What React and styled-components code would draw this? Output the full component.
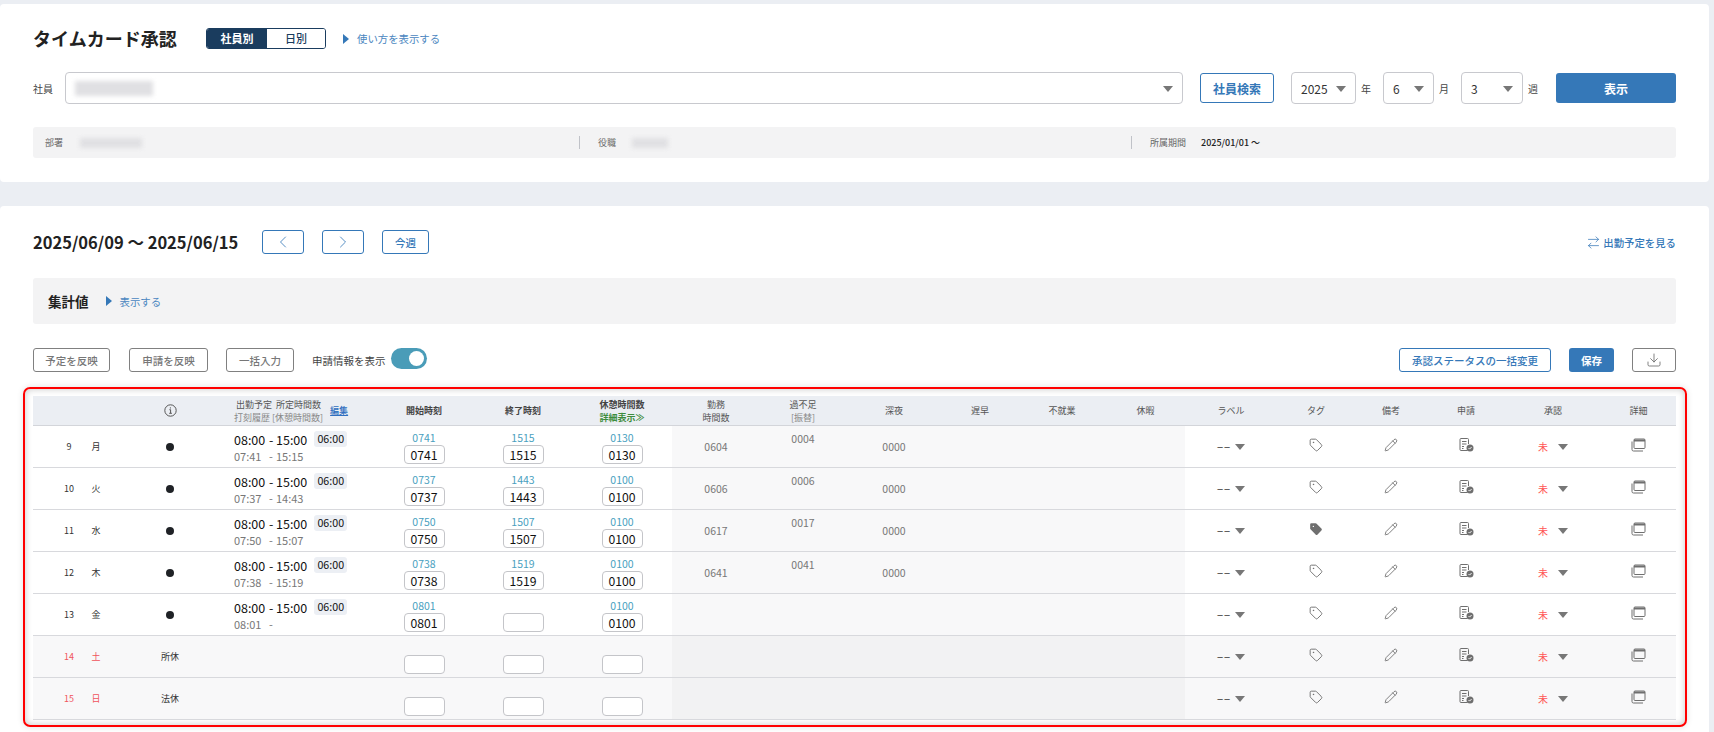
import React from 'react';
import styled, {createGlobalStyle} from 'styled-components';
import {ArrowRightLeft, ChevronLeft, ChevronRight, Download, Pencil, Tag} from 'lucide-react';

const blue = '#3578b8';
const linkBlue = '#4a86c0';
const gridColumns = '97px 80px 164px 100px 98px 100px 88px 86px 96px 76px 88px 79px 92px 78px 72px 78px 96px 75px';

const days = [
  {num: 9, week: '月', start: '0741', end: '1515', rest: '0130', in: '07:41', out: '15:15', work: '0604', over: '0004', deep: '0000'},
  {num: 10, week: '火', start: '0737', end: '1443', rest: '0100', in: '07:37', out: '14:43', work: '0606', over: '0006', deep: '0000'},
  {num: 11, week: '水', start: '0750', end: '1507', rest: '0100', in: '07:50', out: '15:07', work: '0617', over: '0017', deep: '0000', tagged: true},
  {num: 12, week: '木', start: '0738', end: '1519', rest: '0100', in: '07:38', out: '15:19', work: '0641', over: '0041', deep: '0000'},
  {num: 13, week: '金', start: '0801', end: '', rest: '0100', in: '08:01', out: ''},
  {num: 14, week: '土', off: '所休', start: '', end: '', rest: ''},
  {num: 15, week: '日', off: '法休', start: '', end: '', rest: ''},
];

const InfoIcon = () => (
  <svg width="13" height="13" viewBox="0 0 13 13" fill="none" stroke="#555" strokeWidth="1">
    <circle cx="6.5" cy="6.5" r="5.7" />
    <path d="M5.4 5.7h1.2v3.4M5.2 9.3h2.7" />
    <circle cx="6.4" cy="3.9" r=".6" fill="#555" stroke="none" />
  </svg>
);

const FilledTag = () => (
  <svg width="14" height="14" viewBox="0 0 24 24" fill="#6f6f6f">
    <path fillRule="evenodd" d="M12.6 2.6A2 2 0 0 0 11.2 2H4a2 2 0 0 0-2 2v7.2a2 2 0 0 0 .6 1.4l8.7 8.7a2.4 2.4 0 0 0 3.4 0l6.6-6.6a2.4 2.4 0 0 0 0-3.4zM7.5 6.3a1.2 1.2 0 1 1 0 2.4 1.2 1.2 0 0 1 0-2.4z" />
  </svg>
);

const ApplyIcon = () => (
  <svg width="15" height="14" viewBox="0 0 15 14" fill="none" stroke="#6f6f6f" strokeWidth="1">
    <path d="M8.5 12.5H2a1 1 0 0 1-1-1v-10a1 1 0 0 1 1-1h6.5a1 1 0 0 1 1 1V6" />
    <path d="M3 3.5h4.5M3 6h4.5M3 8.5h2M3 10.500h1.500" />
    <circle cx="11" cy="10" r="3.500" fill="#6f6f6f" stroke="none" />
    <path d="M9.500 10l1.100 1.100L12.600 9" stroke="#fff" strokeWidth=".9" />
  </svg>
);

const DetailIcon = () => (
  <svg width="15" height="14" viewBox="0 0 15 14" fill="none" stroke="#6f6f6f" strokeWidth="1">
    <rect x="3" y="1" width="11" height="9.500" rx="1" />
    <path d="M3 2.500h11" strokeWidth="2" />
    <path d="M1 3.500v8a1.500 1.500 0 0 0 1.500 1.500H12" />
  </svg>
);

const TimeInput = ({value}) => <CellInput value={value} readOnly />;

const App = () => (
  <Page>
    <GlobalStyle />
    <Card>
      <TitleRow>
        <Title>タイムカード承認</Title>
        <Segment>
          <SegmentItem $active>社員別</SegmentItem>
          <SegmentItem>日別</SegmentItem>
        </Segment>
        <Disclosure><Triangle />使い方を表示する</Disclosure>
      </TitleRow>
      <SearchRow>
        <FieldLabel>社員</FieldLabel>
        <SelectBox $grow>
          <BlurBlock $w={78} $h={15} />
          <Caret />
        </SelectBox>
        <SearchButton>社員検索</SearchButton>
        <SelectBox $w={65} $ml={17}>2025<Caret /></SelectBox>
        <UnitLabel>年</UnitLabel>
        <SelectBox $w={51} $ml={12}>6<Caret /></SelectBox>
        <UnitLabel>月</UnitLabel>
        <SelectBox $w={62} $ml={12}>3<Caret /></SelectBox>
        <UnitLabel>週</UnitLabel>
        <PrimaryButton>表示</PrimaryButton>
      </SearchRow>
      <InfoBar>
        <InfoItem $w={534}>
          <InfoLabel>部署</InfoLabel>
          <BlurBlock $w={62} $h={10} $ml={17} />
        </InfoItem>
        <InfoItem $w={552}>
          <InfoLabel>役職</InfoLabel>
          <BlurBlock $w={36} $h={10} $ml={16} />
        </InfoItem>
        <InfoItem>
          <InfoLabel>所属期間</InfoLabel>
          <InfoValue>2025/01/01 〜</InfoValue>
        </InfoItem>
      </InfoBar>
    </Card>

    <Card $fill>
      <PeriodRow>
        <PeriodTitle>2025/06/09 〜 2025/06/15</PeriodTitle>
        <NavButton $ml={23}><ChevronLeft size={20} strokeWidth={1} /></NavButton>
        <NavButton $ml={18}><ChevronRight size={20} strokeWidth={1} /></NavButton>
        <NavButton $ml={18} $w={47}>今週</NavButton>
        <SwitchLink><ArrowRightLeft size={15} strokeWidth={1.200} />出勤予定を見る</SwitchLink>
      </PeriodRow>
      <SummaryBar>
        <SummaryTitle>集計値</SummaryTitle>
        <Disclosure><Triangle />表示する</Disclosure>
      </SummaryBar>
      <ActionRow>
        <GhostButton $w={77}>予定を反映</GhostButton>
        <GhostButton $w={79} $ml={19}>申請を反映</GhostButton>
        <GhostButton $w={68} $ml={18}>一括入力</GhostButton>
        <ToggleLabel>申請情報を表示</ToggleLabel>
        <ToggleTrack><ToggleKnob /></ToggleTrack>
        <Spacer />
        <OutlineButton>承認ステータスの一括変更</OutlineButton>
        <SaveButton>保存</SaveButton>
        <GhostButton $w={44} $ml={18}><Download size={16} strokeWidth={1.300} color="#6f6f6f" /></GhostButton>
      </ActionRow>
      <Highlight>
        <HeaderRow>
          <HeadCell />
          <HeadCell><InfoIcon /></HeadCell>
          <HeadSchedule>
            <HeadLines $center>
              <span>出勤予定&nbsp;&nbsp;所定時間数</span>
              <HeadSub>打刻履歴 [休憩時間数]</HeadSub>
            </HeadLines>
            <EditLink>編集</EditLink>
          </HeadSchedule>
          <HeadCell $bold>開始時刻</HeadCell>
          <HeadCell $bold>終了時刻</HeadCell>
          <HeadCell $bold>
            <HeadLines $center>
              <span>休憩時間数</span>
              <DetailLink>詳細表示≫</DetailLink>
            </HeadLines>
          </HeadCell>
          <HeadCell><HeadLines $center><span>勤務</span><span>時間数</span></HeadLines></HeadCell>
          <HeadCell><HeadLines $center><span>過不足</span><HeadSub>[振替]</HeadSub></HeadLines></HeadCell>
          <HeadCell>深夜</HeadCell>
          <HeadCell>遅早</HeadCell>
          <HeadCell>不就業</HeadCell>
          <HeadCell>休暇</HeadCell>
          <HeadCell>ラベル</HeadCell>
          <HeadCell>タグ</HeadCell>
          <HeadCell>備考</HeadCell>
          <HeadCell>申請</HeadCell>
          <HeadCell>承認</HeadCell>
          <HeadCell>詳細</HeadCell>
        </HeaderRow>
        {days.map(day => (
          <Row key={day.num} $off={!!day.off}>
            <DayCell $off={!!day.off}>
              <DayNum>{day.num}</DayNum>
              <DayWeek>{day.week}</DayWeek>
            </DayCell>
            <Cell>{day.off ? <OffText>{day.off}</OffText> : <Dot />}</Cell>
            <ScheduleCell>
              {!day.off && (
                <>
                  <PlanLine>
                    <TimeText>08:00</TimeText><Dash>-</Dash><span>15:00</span>
                    <HoursBadge>06:00</HoursBadge>
                  </PlanLine>
                  <ActualLine>
                    <TimeText>{day.in}</TimeText><Dash>-</Dash><span>{day.out}</span>
                  </ActualLine>
                </>
              )}
            </ScheduleCell>
            {[day.start, day.end, day.rest].map((time, i) => (
              <TimeCell key={i}>
                <Planned>{time}</Planned>
                <TimeInput value={time} />
              </TimeCell>
            ))}
            <SumCell $off={!!day.off}>{day.work}</SumCell>
            <SumCell $off={!!day.off} $top>{day.over}</SumCell>
            <SumCell $off={!!day.off}>{day.deep}</SumCell>
            <SumCell $off={!!day.off} />
            <SumCell $off={!!day.off} />
            <SumCell $off={!!day.off} />
            <Cell>
              <LabelDash>−−</LabelDash><RowCaret />
            </Cell>
            <IconCell>
              {day.tagged ? <FilledTag /> : <Tag size={14} strokeWidth={1.600} color="#6f6f6f" />}
            </IconCell>
            <IconCell><Pencil size={14} strokeWidth={1.500} color="#6f6f6f" /></IconCell>
            <IconCell><ApplyIcon /></IconCell>
            <Cell>
              <NotYet>未</NotYet><RowCaret />
            </Cell>
            <IconCell><DetailIcon /></IconCell>
          </Row>
        ))}
      </Highlight>
    </Card>
  </Page>
);

export default App;

const GlobalStyle = createGlobalStyle`
  html, body {
    margin: 0;
    height: 100%;
    overflow: hidden;
    background: #ebeef3;
    font-family: "Noto Sans CJK JP", "Noto Sans", sans-serif;
    color: #222;
  }
  * { box-sizing: border-box; }
`;

const Page = styled.div`
  display: flex;
  flex-direction: column;
  gap: 24px;
  height: 732px;
  padding: 4px 5px 0 0;
`;

const Card = styled.section`
  flex: ${props => props.$fill ? '1' : 'none'};
  padding: 24px 33px;
  background: #fff;
  border-radius: 4px;
`;

const TitleRow = styled.div`
  display: flex;
  align-items: center;
  height: 21px;
`;

const Title = styled.h1`
  margin: 0;
  width: 173px;
  font-size: 18px;
  font-weight: 700;
  line-height: 21px;
`;

const Segment = styled.div`
  display: flex;
  width: 120px;
  height: 21px;
  border: 1px solid #1a3c5e;
  border-radius: 3px;
  overflow: hidden;
`;

const SegmentItem = styled.div`
  flex: ${props => props.$active ? '0 0 60px' : '1'};
  font-size: 11px;
  font-weight: ${props => props.$active ? 700 : 500};
  line-height: 19px;
  text-align: center;
  color: ${props => props.$active ? '#fff' : '#1a3c5e'};
  background: ${props => props.$active ? '#1a3c5e' : '#fff'};
`;

const Triangle = styled.i`
  width: 0;
  height: 0;
  margin-right: 8px;
  border-style: solid;
  border-width: 5px 0 5px 6px;
  border-color: transparent transparent transparent ${blue};
`;

const Disclosure = styled.div`
  display: flex;
  align-items: center;
  margin-left: 17px;
  font-size: 10.400px;
  color: ${linkBlue};
`;

const SearchRow = styled.div`
  display: flex;
  align-items: center;
  height: 32px;
  margin-top: 23px;
`;

const FieldLabel = styled.span`
  width: 32px;
  font-size: 10px;
  color: #444;
`;

const SelectBox = styled.div`
  display: flex;
  align-items: center;
  justify-content: space-between;
  flex: ${props => props.$grow ? '1' : 'none'};
  width: ${props => props.$w ? props.$w + 'px' : 'auto'};
  height: 32px;
  margin-left: ${props => props.$ml || 0}px;
  padding: 0 9px;
  border: 1px solid #c8c9ce;
  border-radius: 4px;
  font-size: 12px;
  color: #333;
`;

const Caret = styled.i`
  width: 0;
  height: 0;
  margin-top: 2px;
  border-style: solid;
  border-width: 6px 5px 0 5px;
  border-color: #777 transparent transparent transparent;
`;

const RowCaret = styled(Caret)`
  margin-left: 4px;
  margin-top: 1px;
`;

const BlurBlock = styled.div`
  width: ${props => props.$w}px;
  height: ${props => props.$h}px;
  margin-left: ${props => props.$ml || 0}px;
  background: #e0e0e3;
  filter: blur(2px);
`;

const SearchButton = styled.button`
  width: 74px;
  height: 30px;
  margin-left: 17px;
  padding: 0;
  background: #fff;
  border: 1px solid ${blue};
  border-radius: 3px;
  font: 700 12px "Noto Sans CJK JP", sans-serif;
  color: ${blue};
`;

const UnitLabel = styled.span`
  width: 10px;
  margin-left: 5px;
  font-size: 10px;
  color: #444;
`;

const PrimaryButton = styled.button`
  width: 120px;
  height: 30px;
  margin-left: 18px;
  background: ${blue};
  border: 0;
  border-radius: 3px;
  font: 700 12px "Noto Sans CJK JP", sans-serif;
  color: #fff;
`;

const InfoBar = styled.div`
  display: flex;
  align-items: center;
  height: 31px;
  margin-top: 23px;
  padding-left: 12px;
  background: #f3f3f4;
  border-radius: 3px;
`;

const InfoItem = styled.div`
  display: flex;
  align-items: center;
  width: ${props => props.$w ? props.$w + 'px' : 'auto'};
  &:not(:first-child) {
    height: 13px;
    padding-left: 18px;
    border-left: 1px solid #c0c2c8;
  }
`;

const InfoLabel = styled.span`
  font-size: 9px;
  color: #666;
`;

const InfoValue = styled.span`
  margin-left: 15px;
  font-size: 9px;
  font-weight: 500;
  color: #222;
`;

const PeriodRow = styled.div`
  display: flex;
  align-items: center;
  height: 24px;
`;

const PeriodTitle = styled.h2`
  margin: 0;
  width: 206px;
  font-size: 16.500px;
  font-weight: 700;
  white-space: nowrap;
`;

const NavButton = styled.button`
  display: flex;
  align-items: center;
  justify-content: center;
  width: ${props => props.$w || 42}px;
  height: 24px;
  margin-left: ${props => props.$ml || 0}px;
  padding: 0;
  background: #fff;
  border: 1px solid ${blue};
  border-radius: 3px;
  font: 500 10.500px "Noto Sans CJK JP", sans-serif;
  color: ${blue};
`;

const SwitchLink = styled.div`
  display: flex;
  align-items: center;
  gap: 2px;
  margin-left: auto;
  font-size: 10.400px;
  font-weight: 500;
  color: ${blue};
`;

const SummaryBar = styled.div`
  display: flex;
  align-items: center;
  height: 46px;
  margin-top: 24px;
  padding-left: 15px;
  background: #f3f3f4;
  border-radius: 3px;
`;

const SummaryTitle = styled.span`
  font-size: 13.500px;
  font-weight: 700;
`;

const ActionRow = styled.div`
  display: flex;
  align-items: center;
  height: 24px;
  margin-top: 24px;
`;

const GhostButton = styled.button`
  display: flex;
  align-items: center;
  justify-content: center;
  width: ${props => props.$w}px;
  height: 24px;
  margin-left: ${props => props.$ml || 0}px;
  padding: 0;
  background: #fff;
  border: 1px solid #808080;
  border-radius: 3px;
  font: 500 10.500px "Noto Sans CJK JP", sans-serif;
  color: #777;
`;

const ToggleLabel = styled.span`
  margin-left: 18px;
  font-size: 10.500px;
  color: #444;
`;

const ToggleTrack = styled.div`
  display: flex;
  justify-content: flex-end;
  align-items: center;
  width: 36px;
  height: 21px;
  margin-left: 5px;
  margin-bottom: 3px;
  padding-right: 3px;
  background: #4a9cb8;
  border-radius: 11px;
`;

const ToggleKnob = styled.div`
  width: 15px;
  height: 15px;
  background: #fff;
  border-radius: 50%;
`;

const Spacer = styled.div`
  flex: 1;
`;

const OutlineButton = styled.button`
  width: 152px;
  height: 24px;
  padding: 0;
  background: #fff;
  border: 1px solid ${blue};
  border-radius: 3px;
  font: 500 10.500px "Noto Sans CJK JP", sans-serif;
  color: ${blue};
`;

const SaveButton = styled.button`
  width: 45px;
  height: 24px;
  margin-left: 18px;
  padding: 0;
  background: ${blue};
  border: 0;
  border-radius: 3px;
  font: 700 10.500px "Noto Sans CJK JP", sans-serif;
  color: #fff;
`;

const Highlight = styled.div`
  margin: 15px -11px 0 -10px;
  padding: 7px 9px 0 8px;
  height: 340px;
  border: 2px solid #f00;
  border-radius: 7px;
  box-shadow: inset 0 0 7px rgba(0, 0, 0, .22), 0 0 6px rgba(0, 0, 0, .12);
`;

const HeaderRow = styled.div`
  display: grid;
  grid-template-columns: ${gridColumns};
  height: 30px;
  background: #ebeef3;
  border-bottom: 1px solid #d3d5da;
`;

const HeadCell = styled.div`
  display: flex;
  align-items: center;
  justify-content: center;
  font-size: 9px;
  font-weight: ${props => props.$bold ? 700 : 400};
  color: ${props => props.$bold ? '#444' : '#555'};
`;

const HeadSchedule = styled.div`
  display: flex;
  align-items: center;
  padding-left: 24px;
  color: #555;
`;

const HeadLines = styled.div`
  display: flex;
  flex-direction: column;
  align-items: ${props => props.$center ? 'center' : 'flex-start'};
  font-size: 9px;
  line-height: 13px;
  color: inherit;
  white-space: nowrap;
`;

const HeadSub = styled.span`
  color: #888;
`;

const EditLink = styled.a`
  margin-left: 7px;
  font-size: 9px;
  font-weight: 500;
  color: #2f6fc0;
  text-decoration: underline;
`;

const DetailLink = styled.span`
  color: #3c8c3c;
`;

const Row = styled.div`
  display: grid;
  grid-template-columns: ${gridColumns};
  height: 42px;
  background: ${props => props.$off ? '#f8f8f9' : '#fff'};
  border-bottom: 1px solid #d8d9dd;
`;

const Cell = styled.div`
  display: flex;
  align-items: center;
  justify-content: center;
`;

const DayCell = styled.div`
  display: grid;
  grid-template-columns: 24px 20px;
  column-gap: 5px;
  align-items: center;
  padding-left: 24px;
  text-align: center;
  font-size: 9px;
  color: ${props => props.$off ? '#f0545c' : '#333'};
`;

const DayNum = styled.span``;
const DayWeek = styled.span``;

const Dot = styled.i`
  width: 8px;
  height: 8px;
  background: #1f2226;
  border-radius: 50%;
`;

const OffText = styled.span`
  font-size: 9px;
  color: #333;
`;

const ScheduleCell = styled.div`
  padding: 4px 0 0 24px;
`;

const PlanLine = styled.div`
  display: flex;
  align-items: center;
  height: 18px;
  font-size: 12.500px;
  font-weight: 400;
  color: #111;
`;

const ActualLine = styled.div`
  display: flex;
  align-items: center;
  height: 16px;
  font-size: 11px;
  color: #777;
`;

const TimeText = styled.span`
  width: 35px;
`;

const Dash = styled.span`
  width: 7px;
`;

const HoursBadge = styled.span`
  width: 33px;
  height: 16px;
  margin-left: 7px;
  background: #eceff4;
  border-radius: 3px;
  font-size: 10.700px;
  line-height: 16px;
  text-align: center;
`;

const TimeCell = styled.div`
  display: flex;
  flex-direction: column;
  align-items: center;
  padding-top: 5px;
`;

const Planned = styled.div`
  height: 14px;
  font-size: 10.500px;
  line-height: 14px;
  color: #4a9fc0;
`;

const CellInput = styled.input`
  width: 41px;
  height: 19px;
  padding: 0;
  background: #fff;
  border: 1px solid #c4c5c9;
  border-radius: 4px;
  font: 400 12.200px "Noto Sans CJK JP", sans-serif;
  text-align: center;
  color: #111;
  outline: none;
`;

const SumCell = styled.div`
  padding-top: ${props => props.$top ? '5px' : '13px'};
  background: ${props => props.$off ? '#f2f2f3' : '#f8f8f9'};
  font-size: 10.500px;
  line-height: 16px;
  text-align: center;
  color: #777;
`;

const LabelDash = styled.span`
  font-size: 11px;
  letter-spacing: 1px;
  color: #333;
`;

const NotYet = styled.span`
  margin-right: 6px;
  font-size: 10px;
  color: #f55;
`;

const IconCell = styled(Cell)`
  padding-bottom: 3px;
`;
